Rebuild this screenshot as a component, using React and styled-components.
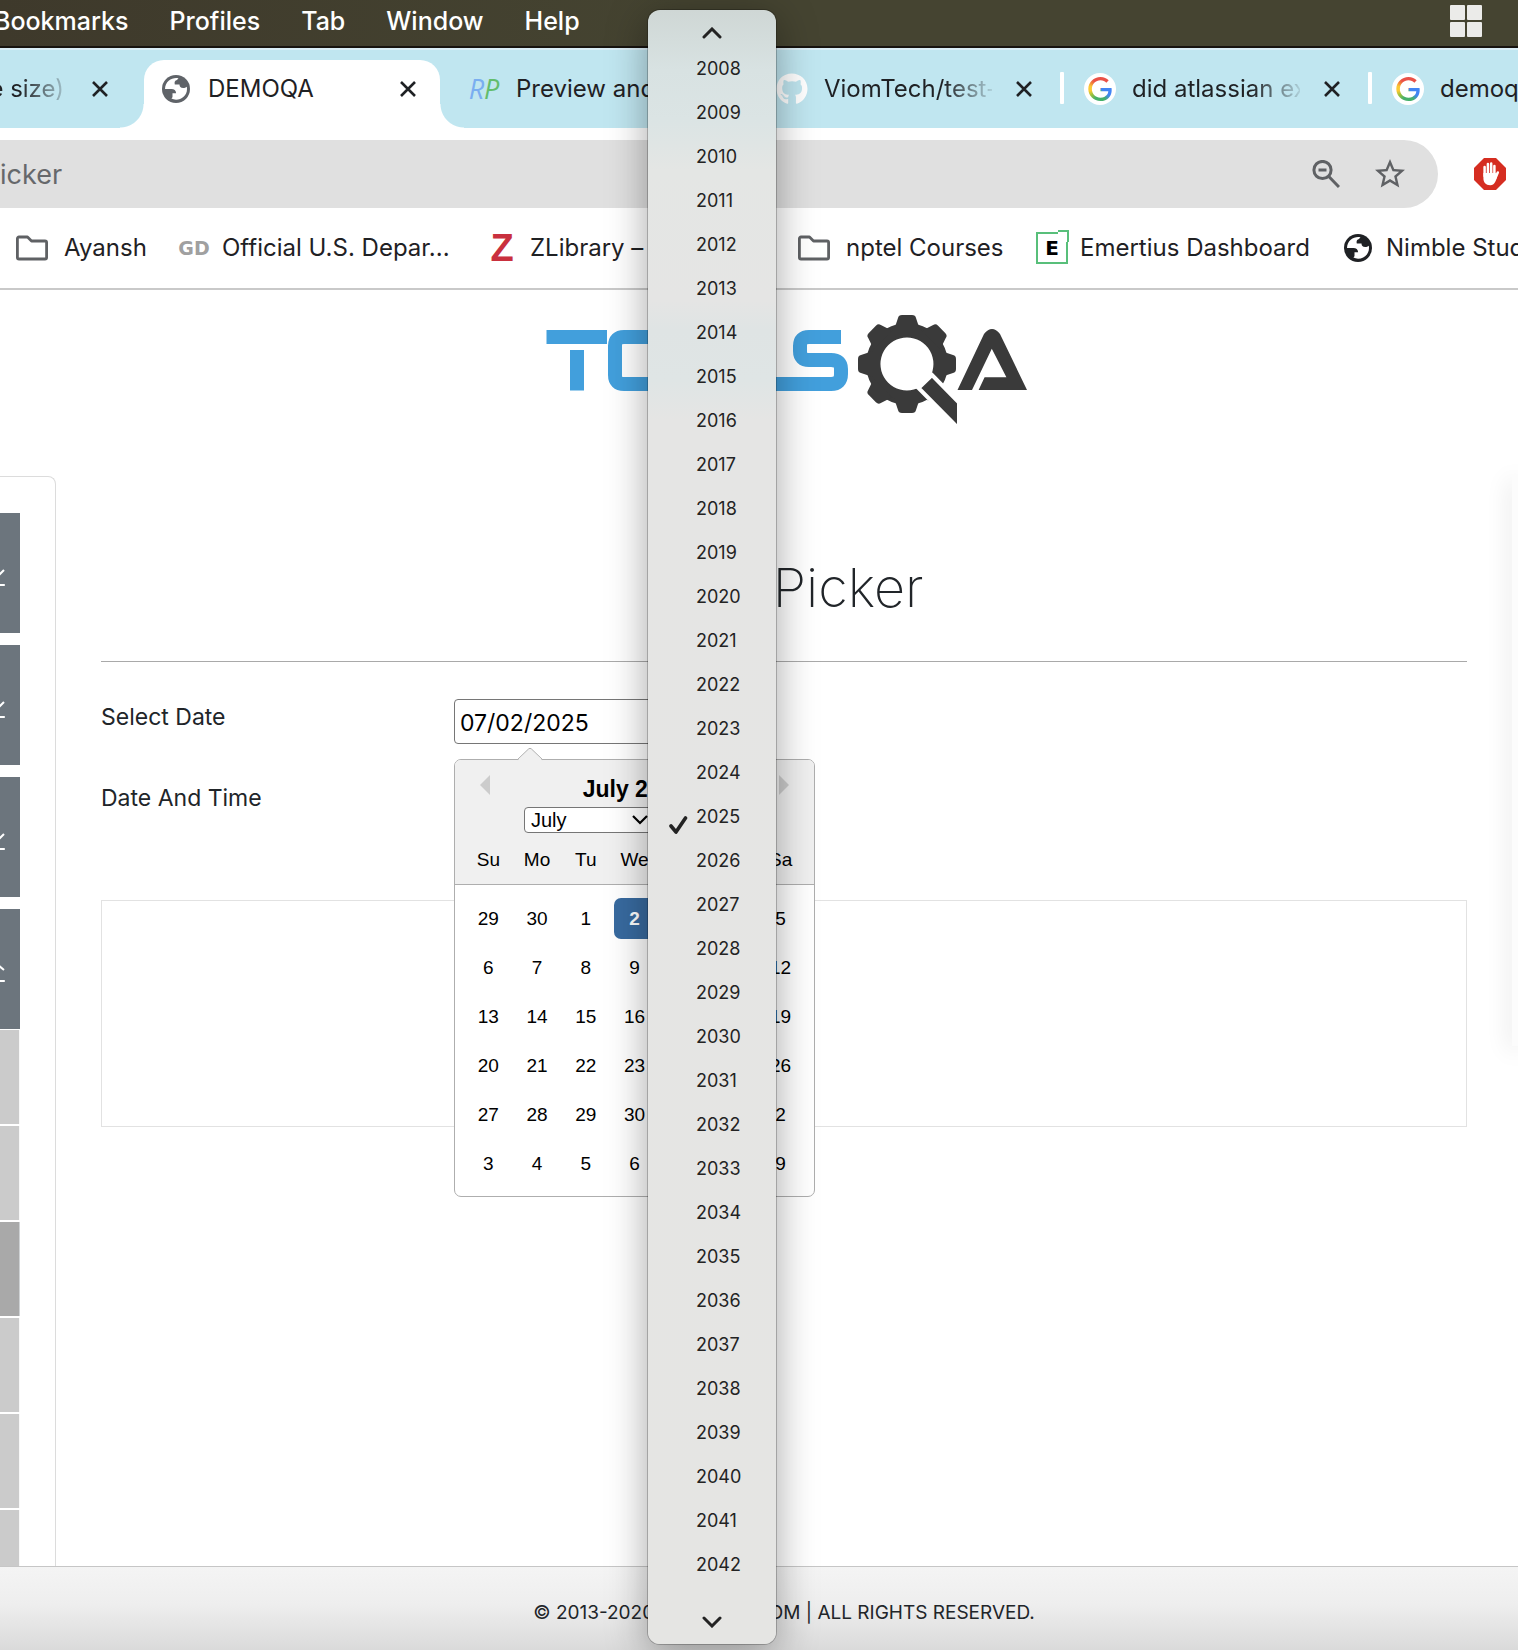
import React from "react";
import styled, { createGlobalStyle, css } from "styled-components";
import { MdStarBorder } from "react-icons/md";
import { FaGithub } from "react-icons/fa";

const UI = `Inter, "Liberation Sans", sans-serif`;
const PLAIN = `"Liberation Sans", Arial, sans-serif`;

const GlobalStyle = createGlobalStyle`
  *, *::before, *::after { box-sizing: border-box; }
  body { margin: 0; background: #fff; font-family: ${UI}; color: #212529; }
  button { font: inherit; color: inherit; border: 0; padding: 0; background: none; cursor: pointer; }
  a { color: inherit; text-decoration: none; }
  svg { display: block; }
`;

const Screen = styled.div`
  position: relative;
  height: 100vh;
  display: flex;
  flex-direction: column;
  overflow: hidden;
`;

/* ---------- system menu bar ---------- */
const MenuBar = styled.nav`
  flex: none;
  height: 48px;
  padding: 0 36px 4px 0;
  display: flex;
  align-items: center;
  gap: 41px;
  background: linear-gradient(90deg, #3e392b, #454431 45%, #454431);
  border-bottom: 2px solid #17130f;
  color: #fff;
  font-size: 25px;
  font-weight: 500;
  & > :first-child { margin-left: -6px; }
`;
const MenuButton = styled.button``;
const TrayButton = styled.button`
  margin-left: auto;
`;
const WindowGrid = styled.span`
  display: grid;
  grid-template-columns: 15px 15px;
  grid-auto-rows: 15px;
  gap: 2px;
  i { background: #ebebe9; border-radius: 1px; }
`;

/* ---------- tab strip ---------- */
const TabStrip = styled.div`
  flex: none;
  height: 80px;
  display: flex;
  background: #c0e6f0;
  border-top: 2px solid #d9edf6;
  overflow: hidden;
  & > :first-child { margin-left: -172px; }
`;
const Tab = styled.div`
  position: relative;
  z-index: 0;
  flex: none;
  width: 308px;
  height: 78px;
  padding: 0 20px 0 24px;
  display: flex;
  align-items: center;
  color: #1f2124;
  ${(p) =>
    p.$divider &&
    css`
      &::before {
        content: "";
        position: absolute;
        left: 0;
        top: 22px;
        width: 4px;
        height: 32px;
        border-radius: 1px;
        background: #fff;
      }
    `}
`;
const ActiveShape = styled.span`
  position: absolute;
  z-index: -1;
  left: 8px;
  right: 4px;
  top: 10px;
  bottom: 0;
  background: #fff;
  border-radius: 20px 20px 0 0;
  &::before, &::after {
    content: "";
    position: absolute;
    bottom: 0;
    width: 24px;
    height: 24px;
  }
  &::before { right: 100%; background: radial-gradient(circle at 0 0, transparent 23px, #fff 24px); }
  &::after { left: 100%; background: radial-gradient(circle at 100% 0, transparent 23px, #fff 24px); }
`;
const TabIcon = styled.span`
  flex: none;
  width: 32px;
  height: 32px;
  display: grid;
  place-items: center;
  border-radius: 50%;
  background: ${(p) => (p.$plate ? "#fff" : "none")};
`;
const TabTitle = styled.a`
  flex: none;
  width: 168px;
  margin-left: 16px;
  overflow: hidden;
  white-space: nowrap;
  font-size: 24px;
  line-height: 32px;
  ${(p) =>
    p.$end &&
    css`
      padding-right: 4px;
      text-align: right;
    `}
  ${(p) =>
    p.$fade &&
    css`
      mask-image: linear-gradient(90deg, #000 120px, transparent 174px);
    `}
`;
const TabClose = styled.button`
  margin-left: auto;
  padding: 8px;
`;
const RpMark = styled.span`
  font: italic 27px/32px "Open Sans", sans-serif;
  color: #7aaef0;
  b { font-weight: 400; color: #63bd6c; }
`;

/* ---------- address bar and bookmarks ---------- */
const AddressRow = styled.div`
  flex: none;
  display: flex;
  align-items: center;
  padding: 12px 12px 0 0;
  background: #fff;
`;
const Omnibox = styled.div`
  flex: 1;
  height: 68px;
  display: flex;
  align-items: center;
  gap: 32px;
  padding-right: 30px;
  margin-right: 36px;
  background: #e0e0e0;
  border-radius: 0 34px 34px 0;
  color: #5f6164;
`;
const AddressInput = styled.input`
  flex: 1;
  min-width: 0;
  border: 0;
  padding: 0;
  outline: 0;
  background: none;
  color: #66686b;
  font: 27px ${UI};
`;
const BookmarkBar = styled.nav`
  flex: none;
  height: 82px;
  padding-left: 16px;
  display: flex;
  align-items: center;
  border-bottom: 2px solid #c9c9c9;
  overflow: hidden;
`;
const Bookmark = styled.a`
  flex: none;
  width: ${(p) => p.$width}px;
  display: flex;
  align-items: center;
  gap: ${(p) => (p.$folder ? 16 : 12)}px;
  white-space: nowrap;
  color: #1f2124;
  font-size: 24px;
  line-height: 32px;
`;
const MarkSlot = styled.span`
  flex: none;
  width: 32px;
  height: 32px;
  display: grid;
  place-items: center;
`;
const GdMark = styled.span`
  font: bold 19px/32px "DejaVu Sans", sans-serif;
  color: #a0a0a0;
`;
const ZMark = styled.span`
  font: bold 38px/32px "Liberation Sans", sans-serif;
  color: #c9303e;
`;
const EFrame = styled(MarkSlot)`
  position: relative;
  border: 2px solid #58bf7a;
  font: 900 20px/28px "DejaVu Sans", sans-serif;
  color: #000;
  &::after {
    content: "";
    position: absolute;
    right: -3px;
    top: -4px;
    width: 11px;
    height: 12px;
    border: solid #58bf7a;
    border-width: 2px 2px 0 0;
    background: #fff;
  }
`;

/* ---------- page ---------- */
const PageHeader = styled.header`
  flex: none;
  height: 186px;
  padding: 20px 0 0 50px;
  display: flex;
  justify-content: center;
  align-items: flex-start;
`;
const PageBody = styled.div`
  flex: 1;
  min-height: 0;
  display: flex;
  overflow: hidden;
`;
const Sidebar = styled.aside`
  flex: none;
  width: 56px;
  padding-top: 36px;
  border: solid #dcdcdc;
  border-width: 1px 1px 0 0;
  border-radius: 0 8px 0 0;
`;
const GroupButton = styled.button`
  display: flex;
  align-items: center;
  width: 20px;
  height: 120px;
  margin-bottom: ${(p) => (p.$open ? 1 : 12)}px;
  background: #6c757d;
`;
const SideList = styled.ul`
  list-style: none;
  margin: 0;
  padding: 0;
  display: grid;
  gap: 2px;
  width: 20px;
`;
const SideItem = styled.li`
  a {
    display: block;
    height: 94px;
    background: ${(p) => (p.$active ? "#a9a9a9" : "#cbcbcb")};
    border-right: 1px solid ${(p) => (p.$active ? "#cfd2d4" : "#f8f8f8")};
  }
`;
const Main = styled.main`
  flex: 1;
  min-width: 0;
  padding: 76px 51px 0 45px;
`;
const Title = styled.h1`
  margin: 0 0 37px;
  text-align: center;
  font-size: 54px;
  font-weight: 200;
  line-height: 72px;
`;
const Rule = styled.hr`
  margin: 0 0 37px;
  border: 0;
  border-top: 1px solid #a9a9a9;
`;
const Field = styled.div`
  display: flex;
  align-items: flex-start;
  margin-bottom: ${(p) => (p.$last ? 75 : 36)}px;
`;
const FieldLabel = styled.label`
  flex: none;
  width: 353px;
  font-size: 23px;
  line-height: 37px;
`;
const FieldControl = styled.div`
  position: relative;
`;
const DateInput = styled.input`
  display: block;
  width: 303px;
  height: 45px;
  padding: 2px 5px 0;
  border: 1px solid #767676;
  border-radius: 4px;
  background: #fff;
  color: #000;
  font: 23px ${UI};
  outline: 0;
`;
const ContentBox = styled.section`
  height: 227px;
  border: 1px solid #e2e2e2;
`;
const AdPanel = styled.aside`
  position: absolute;
  right: 0;
  top: 476px;
  width: 6px;
  height: 570px;
  background: #fcfcfc;
  box-shadow: 0 4px 24px rgba(0, 0, 0, 0.2);
`;
const Footer = styled.footer`
  flex: none;
  height: 84px;
  padding: 8px 0 0 50px;
  display: flex;
  align-items: center;
  justify-content: center;
  border-top: 1px solid #c6c6c6;
  background: linear-gradient(#f4f4f4, #eeeeee 45%, #dadada);
  font-size: 19px;
`;

/* ---------- calendar ---------- */
const Calendar = styled.div`
  position: absolute;
  z-index: 2;
  left: 0;
  top: 60px;
  width: 361px;
  border: 1px solid #aeaeae;
  border-radius: 7px;
  background: #fff;
  color: #000;
  font-family: ${PLAIN};
  font-size: 19px;
`;
const Pointer = styled.svg`
  position: absolute;
  left: 61px;
  top: -13px;
`;
const CalendarHead = styled.div`
  height: 125px;
  padding: 15px 9px 0;
  display: flex;
  flex-direction: column;
  border-bottom: 1px solid #aeaeae;
  border-radius: 6px 6px 0 0;
  background: #f0f0f0;
`;
const CaptionRow = styled.div`
  display: flex;
  justify-content: space-between;
  align-items: flex-start;
  padding: 0 16px;
  height: 32px;
`;
const Caption = styled.h2`
  margin: 0;
  font-size: 23px;
  line-height: 28px;
`;
const SelectRow = styled.div`
  display: flex;
  justify-content: center;
`;
const PickSelect = styled.span`
  position: relative;
  width: ${(p) => p.$width}px;
  select {
    display: block;
    width: 100%;
    height: 26px;
    padding: 0 6px;
    appearance: none;
    border: 1px solid #767676;
    border-radius: 4px;
    background: #fff;
    color: #000;
    font: 20px ${PLAIN};
  }
  svg {
    position: absolute;
    right: 4px;
    top: 8px;
    pointer-events: none;
  }
`;
const WeekRow = styled.div`
  display: grid;
  grid-template-columns: repeat(7, 1fr);
  margin-top: 7px;
  line-height: 40px;
  text-align: center;
`;
const DayTable = styled.table`
  width: 341px;
  margin: 9px 9px 8px;
  table-layout: fixed;
  border-collapse: collapse;
  td { height: 49px; padding: 0; text-align: center; }
`;
const Day = styled.button`
  width: 41px;
  height: 41px;
  border-radius: 7px;
  ${(p) =>
    p.$selected &&
    css`
      background: #386a9f;
      color: #fff;
      font-weight: 700;
    `}
`;

/* ---------- year menu ---------- */
const YearMenu = styled.div`
  position: absolute;
  z-index: 5;
  left: 648px;
  top: 10px;
  width: 128px;
  display: flex;
  flex-direction: column;
  align-items: center;
  border-radius: 12px;
  background: linear-gradient(
    #cfd7d5 0, #d8e2e2 60px, #dbe4e4 110px, #e4e6e4 160px, #e5e5e4 290px,
    #dfe4e4 320px, #dfe5e5 370px, #e5e5e4 410px, #e5e5e3 100%
  );
  box-shadow: 0 0 0 1px rgba(0, 0, 0, 0.22), 0 8px 40px rgba(0, 0, 0, 0.36);
  color: #232323;
`;
const ScrollButton = styled.button`
  width: 100%;
  height: ${(p) => (p.$bottom ? 57 : 37)}px;
  padding-top: ${(p) => (p.$bottom ? 12 : 8)}px;
  display: grid;
  place-items: center;
`;
const YearList = styled.ul`
  list-style: none;
  width: 100%;
  margin: 0;
  padding: 0;
`;
const YearOption = styled.li`
  height: 44px;
  padding-left: 20px;
  display: grid;
  grid-template-columns: 28px 1fr;
  align-items: center;
  font-size: 18px;
  line-height: 24px;
  svg { margin-top: 16px; }
`;

const GlobeIcon = ({ color = "#1f2124" }) => (
  <svg width="28" height="28" viewBox="0 0 28 28" aria-hidden="true">
    <circle cx="14" cy="14" r="14" fill={color} />
    <path fill="#fff" d="M16.5 3.4C11 2 3.2 5.8 3 14h6.5c2.6 0 4.6 1.6 4.6 4.2h-3.6v3.6c0 .6-.6 1.3-1.2 1.8 6.5 3.3 15.7-.9 15.7-9.6 0-.8-.1-1.4-.2-2.2-1 .9-2.2 1.2-3.6 1.2-2.6 0-3.7-1.5-3.7-3.6h-4.7c-.6-2 .1-3.9 2.2-4.3.3-.8.8-1.3 1.5-1.7z" />
  </svg>
);

const CloseIcon = () => (
  <svg width="16" height="16" viewBox="0 0 16 16" fill="none" stroke="#1f2124" strokeWidth="2.6" aria-hidden="true">
    <path d="M1 1l14 14M15 1L1 15" />
  </svg>
);

const GoogleDisc = styled.span`
  width: 24px;
  height: 24px;
  background: conic-gradient(from 0deg, #ea5147 0 45deg, #4285f4 70deg 125deg, #45b06a 155deg 205deg, #9cc03c 235deg, #fbc934 260deg 285deg, #f0763c 310deg, #ea5147 325deg);
  clip-path: path("M12.48 10.92v3.28h7.84c-.24 1.84-.853 3.187-1.787 4.133-1.147 1.147-2.933 2.4-6.053 2.4-4.827 0-8.6-3.893-8.6-8.72s3.773-8.72 8.6-8.72c2.6 0 4.507 1.027 5.907 2.347l2.307-2.307C18.747 1.44 16.133 0 12.48 0 5.867 0 .307 5.387.307 12s5.56 12 12.173 12c3.573 0 6.267-1.173 8.373-3.36 2.16-2.16 2.84-5.213 2.84-7.667 0-.76-.053-1.467-.173-2.053H12.48z");
`;

const FolderIcon = () => (
  <svg width="32" height="26" viewBox="0 0 32 26" fill="none" stroke="#5f6164" strokeWidth="2.8" strokeLinejoin="round" aria-hidden="true">
    <path d="M3 2h8.500l4 4H29a1.600 1.600 0 0 1 1.600 1.600v14.800A1.600 1.600 0 0 1 29 24H3a1.600 1.600 0 0 1-1.600-1.600V3.600A1.600 1.600 0 0 1 3 2z" />
  </svg>
);

const ZoomOutIcon = () => (
  <svg width="28" height="28" viewBox="0 0 28 28" fill="none" stroke="#5f6164" strokeWidth="3" aria-hidden="true">
    <circle cx="10.5" cy="10" r="8.6" />
    <path d="M6.5 10h8M16.8 16.5L27 27" />
  </svg>
);

const BlockerIcon = () => (
  <svg width="32" height="32" viewBox="0 0 32 32" aria-hidden="true">
    <path fill="#d52d21" d="M10 0h12l10 10v12L22 32H10L0 22V10z" />
    <g stroke="#fff" strokeLinecap="round" strokeWidth="2.5" fill="none">
      <path d="M10.6 9v9M13.9 6v11M17.2 5.5v11M20.4 8v10M23.8 14.5l-2.6 6" />
    </g>
    <path fill="#fff" d="M9.4 15h12.2l1.8 2.5c-1 3-1.800 9.800-7.200 9.800-4.500 0-6.800-3-6.800-7z" />
  </svg>
);

const GroupIcon = ({ up }) => (
  <svg width="6" height="32" viewBox="0 0 6 32" stroke="#fff" strokeWidth="2" fill="none" aria-hidden="true">
    <path d={up ? "M-2 12l6 5M0 28h4.8" : "M4 13l-5 5M0 28h4.8"} />
  </svg>
);

const gearTeeth = [0, 45, 90, 135, 180, 225, 270, 315];

const Logo = () => (
  <svg width="492" height="120" viewBox="538 310 492 120" role="img" aria-label="ToolsQA">
    <g fill="none" stroke="#429fdc" strokeWidth="14">
      <path d="M546.5 337H607M577 350V390.5" />
      <path d="M672 337H624Q615 337 615 346V375Q615 384 624 384H672Q681 384 681 375V346Q681 337 672 337z" />
      <path d="M700 384H831Q841 384 841 374V369Q841 360 831 360H809Q800 360 800 351V346Q800 337 809 337H841" />
    </g>
    <g fill="#3a3a3a">
      <path fillRule="evenodd" d="M907 323a41 41 0 1 0 .1 0zM907 337.500a26.500 26.500 0 1 1-.1 0z" />
      {gearTeeth.map((a) => (
        <path key={a} transform={`rotate(${a} 907 364)`} d="M894 330L898 318Q898.500 315 902 315H912Q915.500 315 916 318L920 330z" />
      ))}
      <path stroke="#fff" strokeWidth="4" d="M932 375L959 402.500V429L918.500 388z" />
      <path fillRule="evenodd" d="M957.500 390L984 334Q992 324 1000 334L1027 390H978.600L984.600 377.300H1006.400L991.800 348.700L972 390z" />
    </g>
  </svg>
);

const weeks = [
  [29, 30, 1, 2, 3, 4, 5],
  [6, 7, 8, 9, 10, 11, 12],
  [13, 14, 15, 16, 17, 18, 19],
  [20, 21, 22, 23, 24, 25, 26],
  [27, 28, 29, 30, 31, 1, 2],
  [3, 4, 5, 6, 7, 8, 9],
];
const years = Array.from({ length: 35 }, (_, i) => 2008 + i);

const tabs = [
  { title: "e size)", end: true, fade: true },
  { title: "DEMOQA", active: true, icon: <GlobeIcon color="#5f6368" /> },
  { title: "Preview and", icon: <RpMark>R<b>P</b></RpMark> },
  { title: "ViomTech/test-", fade: true, icon: <FaGithub size={32} color="#fff" /> },
  { title: "did atlassian ex", fade: true, divider: true, plate: true, icon: <GoogleDisc /> },
  { title: "demoqa", divider: true, plate: true, icon: <GoogleDisc /> },
];

const bookmarks = [
  { label: "Ayansh", width: 162, folder: true, icon: <MarkSlot><FolderIcon /></MarkSlot> },
  { label: "Official U.S. Depar...", width: 308, icon: <MarkSlot><GdMark>GD</GdMark></MarkSlot> },
  { label: "ZLibrary –", width: 312, icon: <MarkSlot><ZMark>Z</ZMark></MarkSlot> },
  { label: "nptel Courses", width: 238, folder: true, icon: <MarkSlot><FolderIcon /></MarkSlot> },
  { label: "Emertius Dashboard", width: 306, icon: <EFrame>E</EFrame> },
  { label: "Nimble Studio", width: 240, icon: <MarkSlot><GlobeIcon /></MarkSlot> },
];

export default function App() {
  return (
    <Screen>
      <GlobalStyle />
      <MenuBar>
        {["Bookmarks", "Profiles", "Tab", "Window", "Help"].map((m) => (
          <MenuButton key={m}>{m}</MenuButton>
        ))}
        <TrayButton aria-label="Window layout">
          <WindowGrid><i /><i /><i /><i /></WindowGrid>
        </TrayButton>
      </MenuBar>

      <TabStrip>
        {tabs.map((t) => (
          <Tab key={t.title} $divider={t.divider}>
            {t.active && <ActiveShape />}
            <TabIcon $plate={t.plate}>{t.icon}</TabIcon>
            <TabTitle href="#" $fade={t.fade} $end={t.end}>{t.title}</TabTitle>
            <TabClose aria-label="Close tab"><CloseIcon /></TabClose>
          </Tab>
        ))}
      </TabStrip>

      <AddressRow>
        <Omnibox>
          <AddressInput aria-label="Address" defaultValue="icker" />
          <button aria-label="Zoom out"><ZoomOutIcon /></button>
          <button aria-label="Bookmark this page"><MdStarBorder size={36} /></button>
        </Omnibox>
        <button aria-label="Ad blocker"><BlockerIcon /></button>
      </AddressRow>

      <BookmarkBar>
        {bookmarks.map((b) => (
          <Bookmark key={b.label} href="#" $width={b.width} $folder={b.folder}>
            {b.icon}
            {b.label}
          </Bookmark>
        ))}
      </BookmarkBar>

      <PageHeader>
        <Logo />
      </PageHeader>

      <PageBody>
        <Sidebar>
          <GroupButton aria-label="Expand group"><GroupIcon /></GroupButton>
          <GroupButton aria-label="Expand group"><GroupIcon /></GroupButton>
          <GroupButton aria-label="Expand group"><GroupIcon /></GroupButton>
          <GroupButton aria-label="Collapse group" $open><GroupIcon up /></GroupButton>
          <SideList>
            {[0, 1, 2, 3, 4, 5].map((i) => (
              <SideItem key={i} $active={i === 2}><a href="#" aria-label={`Item ${i + 1}`} /></SideItem>
            ))}
          </SideList>
        </Sidebar>

        <Main>
          <Title>Date Picker</Title>
          <Rule />
          <Field>
            <FieldLabel htmlFor="date">Select Date</FieldLabel>
            <FieldControl>
              <DateInput id="date" defaultValue="07/02/2025" />
              <Calendar>
                <CalendarHead>
                  <CaptionRow>
                    <button aria-label="Previous month">
                      <svg width="10" height="20" viewBox="0 0 10 20"><path fill="#ccc" d="M10 0v20L0 10z" /></svg>
                    </button>
                    <Caption>July 2025</Caption>
                    <button aria-label="Next month">
                      <svg width="10" height="20" viewBox="0 0 10 20"><path fill="#ccc" d="M0 0v20l10-10z" /></svg>
                    </button>
                  </CaptionRow>
                  <SelectRow>
                    <PickSelect $width={128}>
                      <select aria-label="Month" defaultValue="July"><option>July</option></select>
                      <svg width="16" height="10" viewBox="0 0 16 10" fill="none" stroke="#000" strokeWidth="2.2"><path d="M1 1l7 7 7-7" /></svg>
                    </PickSelect>
                    <PickSelect $width={93}>
                      <select aria-label="Year" defaultValue="2025"><option>2025</option></select>
                    </PickSelect>
                  </SelectRow>
                  <WeekRow>
                    {["Su", "Mo", "Tu", "We", "Th", "Fr", "Sa"].map((d) => <span key={d}>{d}</span>)}
                  </WeekRow>
                </CalendarHead>
                <Pointer width="28" height="14" viewBox="0 0 28 14">
                  <path d="M1 14L12.5 2Q14 .5 15.5 2L27 14z" fill="#f0f0f0" />
                  <path d="M1 13L12.5 2Q14 .5 15.5 2L27 13" fill="none" stroke="#aeaeae" />
                </Pointer>
                <DayTable>
                  <tbody>
                    {weeks.map((w, i) => (
                      <tr key={i}>
                        {w.map((d) => (
                          <td key={d}><Day $selected={i === 0 && d === 2}>{d}</Day></td>
                        ))}
                      </tr>
                    ))}
                  </tbody>
                </DayTable>
              </Calendar>
            </FieldControl>
          </Field>
          <Field $last>
            <FieldLabel htmlFor="datetime">Date And Time</FieldLabel>
            <FieldControl><DateInput id="datetime" /></FieldControl>
          </Field>
          <ContentBox />
        </Main>
      </PageBody>
      <AdPanel />

      <Footer>© 2013-2020 TOOLSQA.COM | ALL RIGHTS RESERVED.</Footer>

      <YearMenu>
        <ScrollButton aria-label="Earlier years">
          <svg width="20" height="12" viewBox="0 0 20 12" fill="none" stroke="#232323" strokeWidth="3" strokeLinecap="round"><path d="M2 10l8-8 8 8" /></svg>
        </ScrollButton>
        <YearList role="listbox" aria-label="Year">
          {years.map((y) => (
            <YearOption key={y} role="option" aria-selected={y === 2025}>
              {y === 2025 ? (
                <svg width="20" height="20" viewBox="0 0 20 20" fill="none" stroke="#232323" strokeWidth="3.6" strokeLinecap="round" strokeLinejoin="round"><path d="M3 11l5 6L17.5 3" /></svg>
              ) : <span />}
              {y}
            </YearOption>
          ))}
        </YearList>
        <ScrollButton $bottom aria-label="Later years">
          <svg width="20" height="12" viewBox="0 0 20 12" fill="none" stroke="#232323" strokeWidth="3" strokeLinecap="round"><path d="M2 2l8 8 8-8" /></svg>
        </ScrollButton>
      </YearMenu>
    </Screen>
  );
}
